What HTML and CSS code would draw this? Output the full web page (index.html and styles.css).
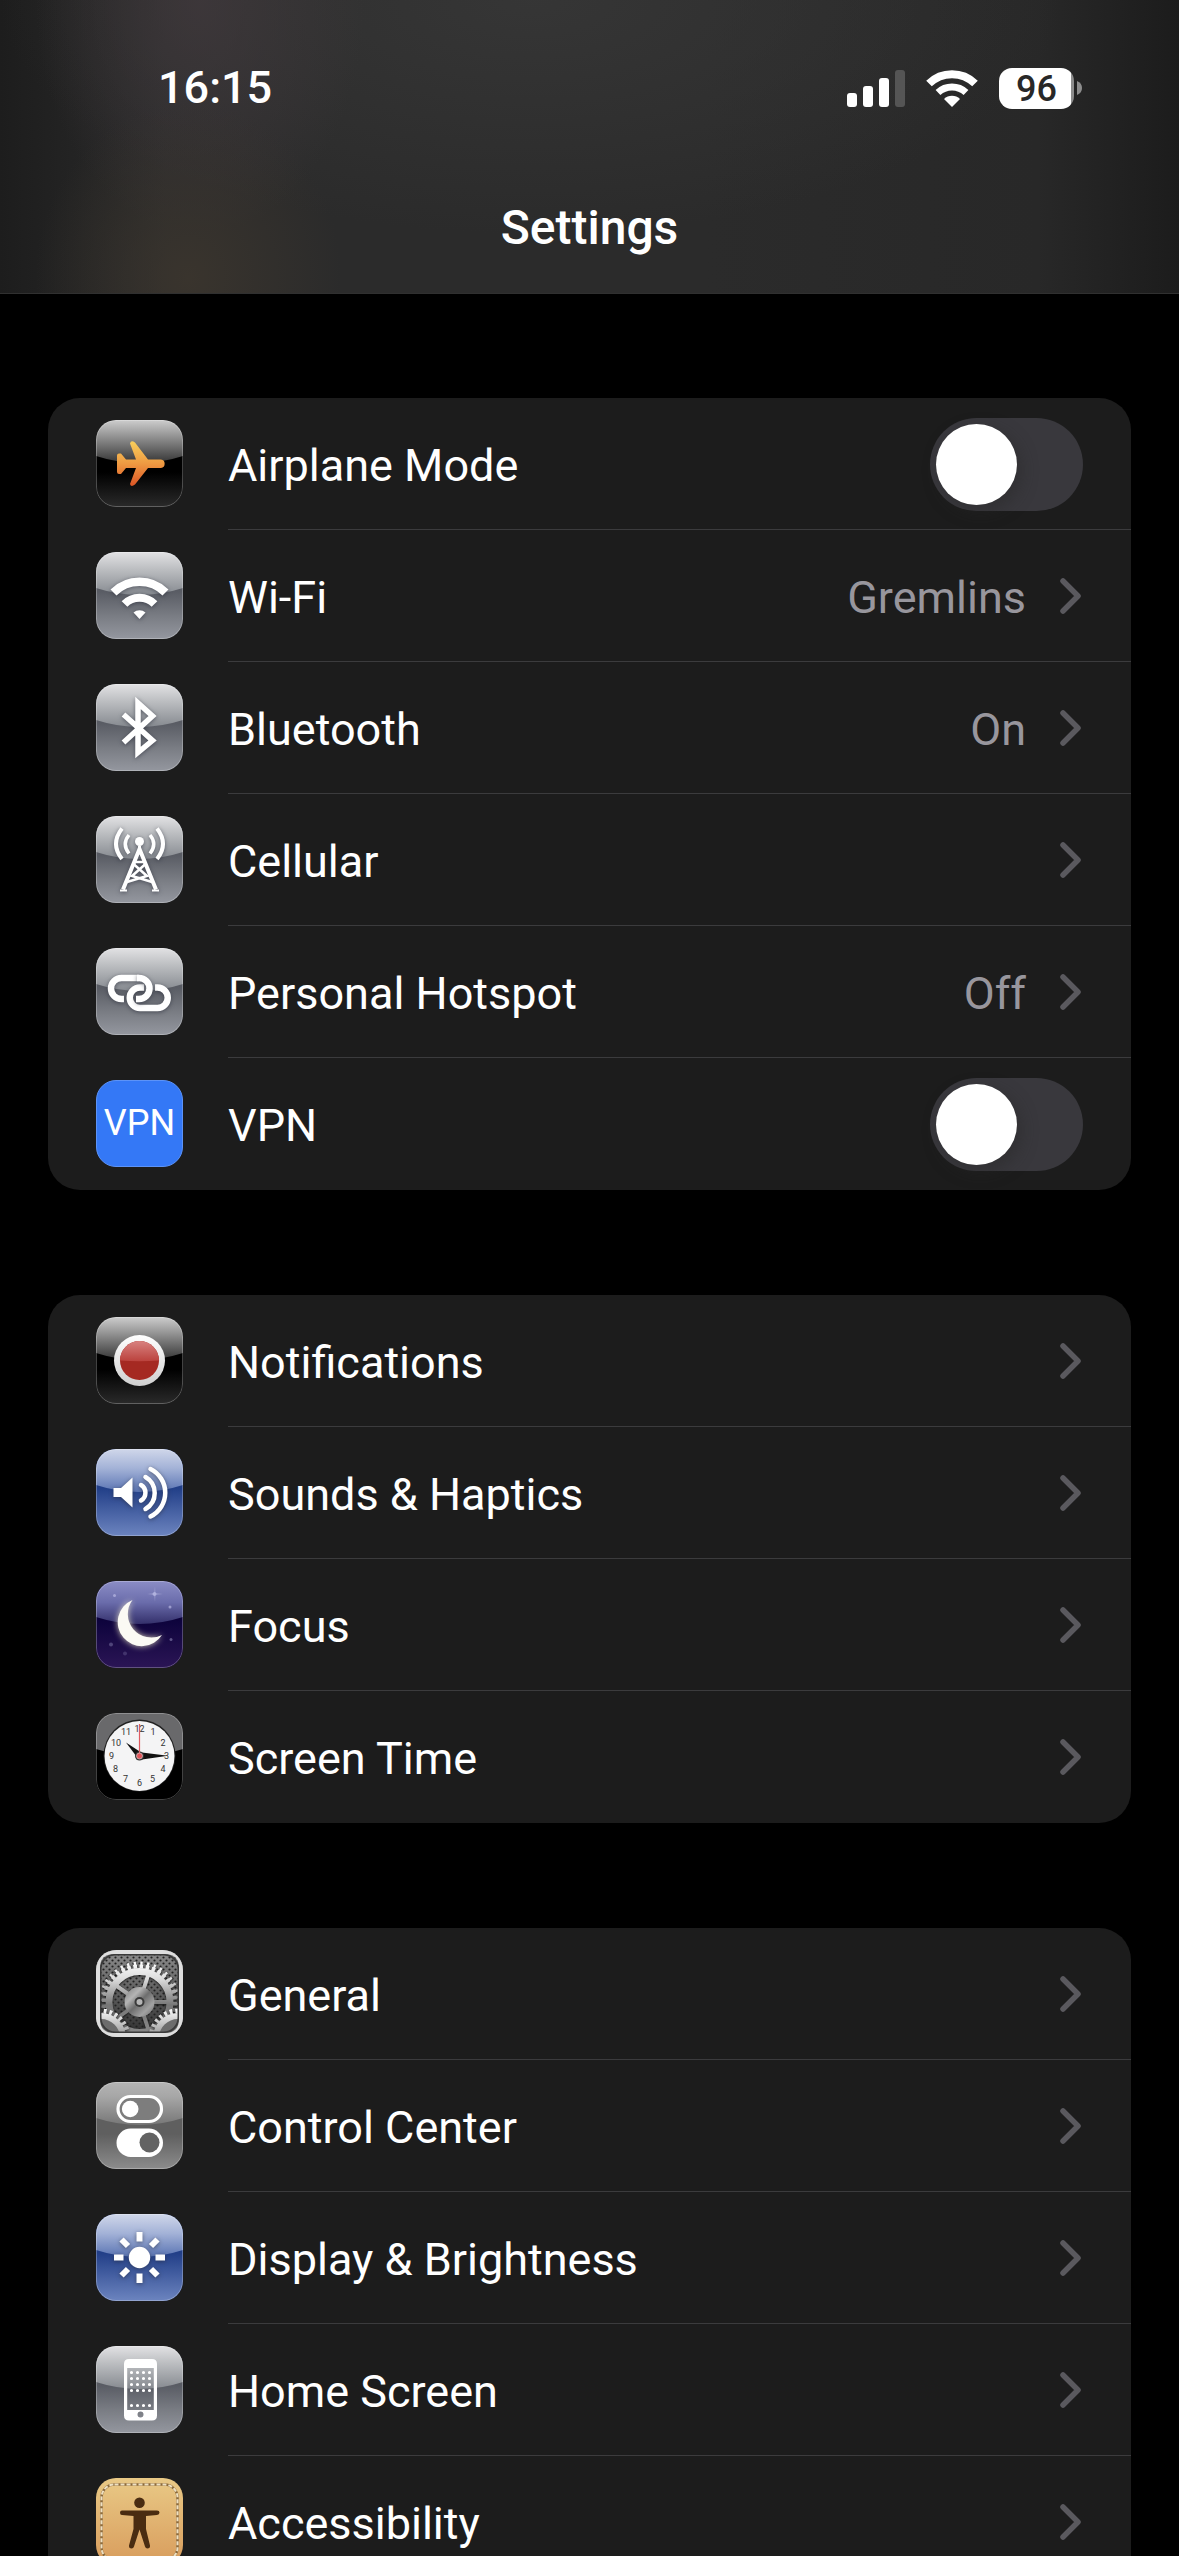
FILE: index.html
```html
<!DOCTYPE html>
<html lang="en">
<head>
<meta charset="utf-8">
<meta name="viewport" content="width=device-width, initial-scale=1">
<title>Settings</title>
<link rel="stylesheet" href="styles.css">
</head>
<body>
<svg class="sprite" width="0" height="0" aria-hidden="true">
  <defs>
    <linearGradient id="silver-base" x1="0" y1="0" x2="0" y2="1"><stop offset=".45" stop-color="#595c64"/><stop offset=".75" stop-color="#7b7e85"/><stop offset="1" stop-color="#94979f"/></linearGradient>
    <linearGradient id="silver-gloss" x1="0" y1="0" x2="0" y2="1"><stop offset="0" stop-color="#e2e2e4"/><stop offset=".4" stop-color="#bcbec1"/><stop offset="1" stop-color="#868a90"/></linearGradient>
    <linearGradient id="black-base" x1="0" y1="0" x2="0" y2="1"><stop offset=".6" stop-color="#000"/><stop offset="1" stop-color="#2a2a2a"/></linearGradient>
    <linearGradient id="black-gloss" x1="0" y1="0" x2="0" y2="1"><stop offset="0" stop-color="#cdcdcd"/><stop offset="1" stop-color="#353535"/></linearGradient>
    <linearGradient id="blue-base" x1="0" y1="0" x2="0" y2="1"><stop offset=".45" stop-color="#223f88"/><stop offset="1" stop-color="#6c84bf"/></linearGradient>
    <linearGradient id="blue-gloss" x1="0" y1="0" x2="0" y2="1"><stop offset="0" stop-color="#d0d7ea"/><stop offset=".45" stop-color="#a3b2d7"/><stop offset="1" stop-color="#5a74b3"/></linearGradient>
    <linearGradient id="night-base" x1="0" y1="0" x2="0" y2="1"><stop offset=".45" stop-color="#0d033c"/><stop offset="1" stop-color="#2b1555"/></linearGradient>
    <linearGradient id="night-gloss" x1="0" y1="0" x2="0" y2="1"><stop offset="0" stop-color="#8b8dc6"/><stop offset=".5" stop-color="#6a6cab"/><stop offset="1" stop-color="#34306b"/></linearGradient>
    <linearGradient id="grey-base" x1="0" y1="0" x2="0" y2="1"><stop offset=".6" stop-color="#5f5f5f"/><stop offset="1" stop-color="#8c8c8c"/></linearGradient>
    <linearGradient id="grey-gloss" x1="0" y1="0" x2="0" y2="1"><stop offset="0" stop-color="#b4b4b4"/><stop offset=".35" stop-color="#a6a6a6"/><stop offset="1" stop-color="#777"/></linearGradient>
    <linearGradient id="plane-fill" x1="0" y1="0" x2="0" y2="1"><stop offset="0" stop-color="#f8cf5c"/><stop offset=".5" stop-color="#ee9a42"/><stop offset="1" stop-color="#dc5525"/></linearGradient>
    <linearGradient id="ring-fill" x1="0" y1="0" x2="0" y2="1"><stop offset="0" stop-color="#fff"/><stop offset="1" stop-color="#cfcfcf"/></linearGradient>
    <linearGradient id="red-gloss" x1="0" y1="0" x2="0" y2="1"><stop offset="0" stop-color="#d88280"/><stop offset="1" stop-color="#bb423d"/></linearGradient>
    <linearGradient id="steel" gradientUnits="userSpaceOnUse" x1="0" y1="10" x2="0" y2="85"><stop offset="0" stop-color="#fff"/><stop offset=".25" stop-color="#ddd"/><stop offset=".6" stop-color="#777"/><stop offset="1" stop-color="#888"/></linearGradient>
    <linearGradient id="steel-small" gradientUnits="userSpaceOnUse" x1="0" y1="58" x2="0" y2="85"><stop offset="0" stop-color="#fff"/><stop offset="1" stop-color="#9a9a9a"/></linearGradient>
    <linearGradient id="hub" x1="0" y1="0" x2="1" y2="1"><stop offset="0" stop-color="#7c7c7c"/><stop offset=".3" stop-color="#b5b5b5"/><stop offset=".5" stop-color="#6d6d6d"/><stop offset=".75" stop-color="#a2a2a2"/><stop offset="1" stop-color="#666"/></linearGradient>
    <linearGradient id="mesh-shade" x1="0" y1="0" x2="0" y2="1"><stop offset="0" stop-color="#8e8e8e"/><stop offset="1" stop-color="#2c2c2c"/></linearGradient>
    <linearGradient id="leather" x1="0" y1="0" x2="0" y2="1"><stop offset="0" stop-color="#e9c986"/><stop offset="1" stop-color="#d89c5c"/></linearGradient>
    <pattern id="mesh" width="6" height="6" patternUnits="userSpaceOnUse"><circle cx="1.5" cy="1.5" r="1.1" fill="#222"/><circle cx="4.5" cy="4.5" r="1.1" fill="#222"/></pattern>
    <path id="gloss" d="M0 0H87V36Q43.500 50 0 36Z"/>
    <rect id="rim" x=".5" y=".5" width="86" height="86" rx="19.500" fill="none" stroke="#fff" stroke-opacity=".26"/>
    <g id="silver"><rect width="87" height="87" fill="url(#silver-base)"/><use href="#gloss" fill="url(#silver-gloss)"/><use href="#rim"/></g>
    <g id="black"><rect width="87" height="87" fill="url(#black-base)"/><use href="#gloss" fill="url(#black-gloss)"/><use href="#rim"/></g>
    <g id="blue"><rect width="87" height="87" fill="url(#blue-base)"/><use href="#gloss" fill="url(#blue-gloss)"/><use href="#rim"/></g>
    <symbol id="chevron" viewBox="0 0 21 36"><path d="M3 3L18 18L3 33" fill="none" stroke="#5a595e" stroke-width="5.500" stroke-linecap="round" stroke-linejoin="round"/></symbol>
  </defs>
</svg>

<div class="screen">
  <header class="top">
    <div class="status">
      <time class="clock">16:15</time>
      <div class="indicators">
        <svg class="signal" viewBox="0 0 58 38" aria-label="Signal strength"><g fill="#fff"><rect y="24" width="10" height="14" rx="3"/><rect x="16" y="17" width="10" height="21" rx="3"/><rect x="32" y="9" width="10" height="29" rx="3"/></g><rect x="48" y="1" width="10" height="37" rx="3" fill="#555"/></svg>
        <svg class="wifi" viewBox="0 0 52 38" aria-label="Wi-Fi signal"><g fill="none" stroke="#fff" stroke-width="8"><path d="M3 14.500A33 33 0 0 1 49 14.500"/><path d="M12 23.500A20.500 20.500 0 0 1 40 23.500" stroke-width="7"/></g><path d="M18 30A11.500 11.500 0 0 1 34 30L26 38Z" fill="#fff"/></svg>
        <div class="battery"><span class="level">96</span><svg class="nub" viewBox="0 0 5 14" aria-hidden="true"><path d="M0 0Q5 2 5 7T0 14Z" fill="#8d8d8d"/></svg></div>
      </div>
    </div>
    <h1 class="title">Settings</h1>
  </header>

  <main class="content">
    <ul class="group">
      <li class="item"><label class="row">
        <svg class="icon" viewBox="0 0 87 87" aria-hidden="true"><use href="#black"/><path d="M21 35.500Q21 33.500 23 33.500H25L30 39.500H40L34 23.500Q35 19.500 39 22.500L52 39.500H65A4.300 4.300 0 0 1 65 48H52L39 64.500Q35 67.500 34 64L40 48H30L25 54H23Q21 54 21 52Z" fill="url(#plane-fill)"/></svg>
        <span class="body"><span class="label">Airplane Mode</span><input class="toggle" type="checkbox" role="switch"></span>
      </label></li>
      <li class="item"><a class="row" href="#wifi">
        <svg class="icon" viewBox="0 0 87 87" aria-hidden="true"><use href="#silver"/><g class="lift"><g fill="none" stroke="#fff" stroke-width="8.500"><path d="M17.500 40.500A37 37 0 0 1 69.500 40.500"/><path d="M28.500 52A21 21 0 0 1 58.500 52" stroke-width="8"/></g><path d="M37.500 60.500A9 9 0 0 1 49.500 60.500L43.500 67Z" fill="#fff"/></g></svg>
        <span class="body"><span class="label">Wi-Fi</span><span class="value">Gremlins</span><svg class="chevron" aria-hidden="true"><use href="#chevron"/></svg></span>
      </a></li>
      <li class="item"><a class="row" href="#bluetooth">
        <svg class="icon" viewBox="0 0 87 87" aria-hidden="true"><use href="#silver"/><path class="lift" d="M27.500 30.500L56.500 56.500L42 68.500V19L56.500 32L27.500 58.500" fill="none" stroke="#fff" stroke-width="5.500"/></svg>
        <span class="body"><span class="label">Bluetooth</span><span class="value">On</span><svg class="chevron" aria-hidden="true"><use href="#chevron"/></svg></span>
      </a></li>
      <li class="item"><a class="row" href="#cellular">
        <svg class="icon" viewBox="0 0 87 87" aria-hidden="true"><use href="#silver"/><g class="lift" fill="none" stroke="#fff"><circle cx="43.500" cy="25.500" r="4.500" fill="#fff" stroke="none"/><path d="M43.500 30V35" stroke-width="3"/><path d="M27 73.500L43.500 33L60 73.500" stroke-width="4"/><path d="M24 74.500H31M56 74.500H63" stroke-width="2"/><path d="M38.500 46H48.500M37.500 48L51 60L31 66M49.500 48L36 60L56 66" stroke-width="2.500"/><path d="M26 12.500Q14 28 26 43M61 12.500Q73 28 61 43" stroke-width="4"/><path d="M33 19Q25.500 28 33 37.500M54 19Q61.500 28 54 37.500" stroke-width="3.500"/></g></svg>
        <span class="body"><span class="label">Cellular</span><svg class="chevron" aria-hidden="true"><use href="#chevron"/></svg></span>
      </a></li>
      <li class="item"><a class="row" href="#hotspot">
        <svg class="icon" viewBox="0 0 87 87" aria-hidden="true"><use href="#silver"/><g fill="none" stroke="#fff" stroke-width="6.500"><path class="lift" d="M28 51H25.500A10.500 10.500 0 0 1 25.500 30H43"/><path class="lift" d="M59 39.500H61.500A10.200 10.200 0 0 1 61.500 60H44A10.200 10.200 0 0 1 44 39.500H48"/><path class="lift" d="M41 30H43A10.500 10.500 0 0 1 43 51H40"/></g></svg>
        <span class="body"><span class="label">Personal Hotspot</span><span class="value">Off</span><svg class="chevron" aria-hidden="true"><use href="#chevron"/></svg></span>
      </a></li>
      <li class="item"><label class="row">
        <span class="icon vpn" aria-hidden="true">VPN</span>
        <span class="body"><span class="label">VPN</span><input class="toggle" type="checkbox" role="switch"></span>
      </label></li>
    </ul>

    <ul class="group">
      <li class="item"><a class="row" href="#notifications">
        <svg class="icon" viewBox="0 0 87 87" aria-hidden="true"><use href="#black"/><circle cx="43.500" cy="43.500" r="25.500" fill="url(#ring-fill)"/><circle cx="43.500" cy="43.500" r="19.500" fill="#a52922"/><path d="M24 43.500A19.500 19.500 0 0 1 63 43.500Q43.500 45 24 43.500Z" fill="url(#red-gloss)"/></svg>
        <span class="body"><span class="label">Notifications</span><svg class="chevron" aria-hidden="true"><use href="#chevron"/></svg></span>
      </a></li>
      <li class="item"><a class="row" href="#sounds">
        <svg class="icon" viewBox="0 0 87 87" aria-hidden="true"><use href="#blue"/><g class="lift"><path d="M17.500 39H25L36.500 28.500V58.500L25 48H17.500Z" fill="#fff"/><path d="M45 36A9 9 0 0 1 45 51.500M49.500 28A18.500 18.500 0 0 1 49.500 60M54.500 20A26.500 26.500 0 0 1 54.500 67.500" fill="none" stroke="#fff" stroke-width="4.500" stroke-linecap="round"/></g></svg>
        <span class="body"><span class="label">Sounds &amp; Haptics</span><svg class="chevron" aria-hidden="true"><use href="#chevron"/></svg></span>
      </a></li>
      <li class="item"><a class="row" href="#focus">
        <svg class="icon" viewBox="0 0 87 87" aria-hidden="true"><rect width="87" height="87" fill="url(#night-base)"/><use href="#gloss" fill="url(#night-gloss)"/><use href="#rim"/><g fill="#c5c5ec"><circle cx="18.500" cy="14.500" r="1.500" opacity=".6"/><circle cx="74" cy="26" r="1.500" opacity=".6"/><circle cx="75" cy="58.500" r="1.500" opacity=".4"/><circle cx="15" cy="63.500" r="2" opacity=".3"/><circle cx="29" cy="72.500" r="2" opacity=".2"/><circle cx="58.500" cy="13" r="2" opacity=".6"/><path d="M59 5L59.500 12L67 13L59.500 14L59 21L58 14L51 13L58 12Z" opacity=".35"/></g><path class="glow" d="M36.500 19A24 24 0 1 0 66 54A23.500 23.500 0 0 1 36.500 19Z" fill="#fbfaf4"/></svg>
        <span class="body"><span class="label">Focus</span><svg class="chevron" aria-hidden="true"><use href="#chevron"/></svg></span>
      </a></li>
      <li class="item"><a class="row" href="#screen-time">
        <svg class="icon" viewBox="0 0 87 87" aria-hidden="true"><rect width="87" height="87" fill="#000"/><use href="#gloss" fill="#69696b"/><use href="#rim"/><circle cx="43.500" cy="42.500" r="36" fill="#222"/><circle cx="43.500" cy="43" r="35" fill="#f4f4f5"/><g class="numerals"><text x="43.500" y="19">12</text><text x="57" y="22">1</text><text x="67" y="33">2</text><text x="70.500" y="46">3</text><text x="67" y="59">4</text><text x="56.500" y="69">5</text><text x="43.500" y="73">6</text><text x="29.500" y="69">7</text><text x="19.500" y="59">8</text><text x="15.500" y="46">9</text><text x="20" y="33">10</text><text x="30" y="22">11</text></g><path d="M30 29.500L46 40L42 45.500Z M46 39.500L72 42.700L46 46.500Z" fill="#111"/><circle cx="43.500" cy="43" r="4.500" fill="#333"/><path d="M43.500 11V43" stroke="#e05a60" stroke-width="1.200"/><circle cx="43.500" cy="43" r="3" fill="#e0555a" stroke="#ddd" stroke-width=".6"/></svg>
        <span class="body"><span class="label">Screen Time</span><svg class="chevron" aria-hidden="true"><use href="#chevron"/></svg></span>
      </a></li>
    </ul>

    <ul class="group">
      <li class="item"><a class="row" href="#general">
        <svg class="icon" viewBox="0 0 87 87" aria-hidden="true"><rect width="87" height="87" fill="url(#mesh-shade)"/><rect width="87" height="87" fill="url(#mesh)"/>
          <g class="gear"><circle cx="43.500" cy="52" r="30.500" fill="none" stroke="url(#steel)" stroke-width="7"/><circle cx="43.500" cy="52" r="35.500" fill="none" stroke="url(#steel)" stroke-width="4" pathLength="360" stroke-dasharray="6 4"/><circle cx="43.500" cy="52" r="38" fill="none" stroke="url(#steel)" stroke-width="5" pathLength="360" stroke-dasharray="3.500 6.500" stroke-dashoffset="-1.250"/>
          <path d="M43.500 52H72M43.500 52L52.500 24M43.500 52L20 35.500M43.500 52L20 69M43.500 52L52.500 80" stroke="url(#steel)" stroke-width="4"/></g>
          <circle cx="43.500" cy="52" r="15" fill="url(#hub)"/><circle cx="43.500" cy="52" r="5" fill="#3a3a3a"/><circle cx="43.500" cy="52" r="3" fill="#b5b5b5"/>
          <g class="gear"><circle cx="5" cy="88" r="20" fill="#6c6c6c"/><circle cx="5" cy="88" r="22" fill="none" stroke="url(#steel-small)" stroke-width="6"/><circle cx="5" cy="88" r="27" fill="none" stroke="url(#steel-small)" stroke-width="5" pathLength="360" stroke-dasharray="6 6"/></g>
          <g class="gear"><circle cx="82" cy="88" r="20" fill="#6c6c6c"/><circle cx="82" cy="88" r="22" fill="none" stroke="url(#steel-small)" stroke-width="6"/><circle cx="82" cy="88" r="27" fill="none" stroke="url(#steel-small)" stroke-width="5" pathLength="360" stroke-dasharray="6 6"/></g>
          <rect x="4.500" y="4.500" width="78" height="78" rx="15" fill="none" stroke="#3a3a3a" stroke-width="2"/><path d="M0 0H87V87H0ZM18 4Q4 4 4 18V69Q4 83 18 83H69Q83 83 83 69V18Q83 4 69 4Z" fill="#dedede" fill-rule="evenodd"/></svg>
        <span class="body"><span class="label">General</span><svg class="chevron" aria-hidden="true"><use href="#chevron"/></svg></span>
      </a></li>
      <li class="item"><a class="row" href="#control-center">
        <svg class="icon" viewBox="0 0 87 87" aria-hidden="true"><rect width="87" height="87" fill="url(#grey-base)"/><use href="#gloss" fill="url(#grey-gloss)"/><use href="#rim"/><rect x="22" y="14.500" width="43.500" height="25" rx="12.500" fill="#7d7d7d" stroke="#fff" stroke-width="3.200"/><circle cx="34.200" cy="27" r="8.300" fill="#fff"/><rect x="20.500" y="46.500" width="46.500" height="28.500" rx="14.200" fill="#fff"/><circle cx="53.500" cy="60.500" r="10" fill="#636363"/></svg>
        <span class="body"><span class="label">Control Center</span><svg class="chevron" aria-hidden="true"><use href="#chevron"/></svg></span>
      </a></li>
      <li class="item"><a class="row" href="#display">
        <svg class="icon" viewBox="0 0 87 87" aria-hidden="true"><use href="#blue"/><g class="lift"><circle cx="43.500" cy="43.500" r="10.700" fill="#fff"/><path d="M43.500 18V27.500M43.500 59.500V69M18 43.500H27.500M59.500 43.500H69M25.500 25.500L32 32M55 55L61.500 61.500M25.500 61.500L32 55M55 32L61.500 25.500" stroke="#fff" stroke-width="6"/></g></svg>
        <span class="body"><span class="label">Display &amp; Brightness</span><svg class="chevron" aria-hidden="true"><use href="#chevron"/></svg></span>
      </a></li>
      <li class="item"><a class="row" href="#home-screen">
        <svg class="icon" viewBox="0 0 87 87" aria-hidden="true"><use href="#silver"/><path d="M33 13H56Q61 13 61 18V69.500Q61 74.500 56 74.500H33Q28 74.500 28 69.500V18Q28 13 33 13ZM31.200 22V64H57.800V22ZM44.500 65.400A3 3 0 1 0 44.500 71.400A3 3 0 1 0 44.500 65.400Z" fill="#fff" fill-rule="evenodd"/><path d="M35.500 26.500H55M35.500 32.500H55M35.500 38.500H55M35.500 44.500H55M35.500 59.500H55" stroke="#fff" stroke-width="3.200" stroke-linecap="round" stroke-dasharray="0 6"/></svg>
        <span class="body"><span class="label">Home Screen</span><svg class="chevron" aria-hidden="true"><use href="#chevron"/></svg></span>
      </a></li>
      <li class="item"><a class="row" href="#accessibility">
        <svg class="icon" viewBox="0 0 87 87" aria-hidden="true"><rect width="87" height="87" fill="url(#leather)"/><rect x="5.500" y="6.500" width="76" height="76" rx="13" fill="none" stroke="#8b6a3c" stroke-width="2.500"/><rect x="5.500" y="6.500" width="76" height="76" rx="13" fill="none" stroke="#eee0c2" stroke-width="2" stroke-dasharray="4 2"/><g fill="#4a2c11"><circle cx="43.500" cy="24.800" r="5.300"/><path d="M26 32.500H61Q63.500 32.500 63.500 34.500T61 37L50 38V51L54 67.500Q54.500 70.500 51.500 70.500Q49.500 70.500 49 68.500L43.500 51.500L38 68.500Q37.500 70.500 35.500 70.500Q32.500 70.500 33 67.500L37.500 51V38L26 37Q24 37 24 34.800T26 32.500Z"/></g></svg>
        <span class="body"><span class="label">Accessibility</span><svg class="chevron" aria-hidden="true"><use href="#chevron"/></svg></span>
      </a></li>
    </ul>
  </main>
</div>
</body>
</html>
```
FILE: styles.css
```css
* {
  box-sizing: border-box;
}

body {
  margin: 0;
  background: #000;
  color: #fff;
  font-family: Roboto, "Noto Sans", sans-serif;
  font-size: 45px;
  line-height: 56px;
}

.sprite {
  position: absolute;
}

.screen {
  display: flex;
  flex-direction: column;
  height: 100vh;
  overflow: hidden;
}

/* Status bar and title */

.top {
  flex: none;
  padding-top: 60px;
  border-bottom: 1px solid #303030;
  background:
    radial-gradient(ellipse 13% 60% at 16% 95%, rgba(62, 55, 46, 0.75), transparent),
    radial-gradient(ellipse 14% 80% at 17% 0, rgba(66, 58, 62, 0.7), transparent),
    radial-gradient(ellipse 45% 80% at 45% 0, rgba(58, 58, 58, 0.7), transparent),
    linear-gradient(90deg, #1d1d1d, #2b2b2b 14%, #2b2b2b 60%, #282828 88%, #1c1c1c);
}

.status {
  display: flex;
  align-items: center;
  justify-content: space-between;
  height: 56px;
  padding: 0 97px 0 158px;
}

.clock {
  font-size: 45px;
  font-weight: 500;
}

.indicators {
  display: flex;
  align-items: center;
  gap: 21px;
}

.signal {
  width: 58px;
  height: 38px;
}

.wifi {
  width: 52px;
  height: 38px;
}

.battery {
  display: flex;
  align-items: center;
  gap: 3px;
}

.level {
  width: 75px;
  height: 41px;
  border-radius: 13px;
  background: linear-gradient(90deg, #fff 72px, #8d8d8d 72px);
  color: #282828;
  font-size: 36px;
  font-weight: 500;
  line-height: 42px;
  text-align: center;
}

.nub {
  width: 5px;
  height: 14px;
}

.title {
  margin: 0;
  padding: 84px 0 37px;
  font-size: 48px;
  font-weight: 500;
  text-align: center;
}

/* Grouped lists */

.content {
  display: flex;
  flex: 1;
  flex-direction: column;
  gap: 105px;
  min-height: 0;
  padding: 104px 48px;
  overflow-y: auto;
  scrollbar-width: none;
}

.group {
  flex: none;
  margin: 0;
  padding: 0;
  border-radius: 32px;
  background: #1c1c1c;
  list-style: none;
  overflow: hidden;
}

.row {
  display: flex;
  align-items: flex-start;
  gap: 45px;
  padding-left: 48px;
  color: inherit;
  text-decoration: none;
}

.icon {
  flex: none;
  width: 87px;
  height: 87px;
  margin-top: 22px;
  border-radius: 20px;
  overflow: hidden;
}

.vpn {
  border: 1px solid #5c93f8;
  background: #3478f6;
  font-size: 36px;
  line-height: 85px;
  text-align: center;
}

.body {
  display: flex;
  flex: 1;
  align-items: center;
  height: 132px;
  padding-right: 48px;
  border-bottom: 1px solid #3b3b3d;
}

.item:last-child .body {
  border-bottom-color: transparent;
}

.label {
  flex: 1;
  padding-top: 5px;
}

.value {
  padding-top: 5px;
  color: #98969d;
}

.chevron {
  width: 21px;
  height: 36px;
  margin: 0 2px 0 34px;
}

.toggle {
  display: flex;
  width: 153px;
  height: 93px;
  margin: 2px 0 0;
  padding: 6px;
  border-radius: 47px;
  background: #39383d;
  appearance: none;
}

.toggle::before {
  width: 81px;
  height: 81px;
  border-radius: 50%;
  background: #fff;
  box-shadow: 4px 6px 16px rgba(40, 40, 40, 0.5);
  content: "";
}

.toggle:checked {
  justify-content: flex-end;
  background: #30d158;
}

/* Icon artwork */

.lift {
  filter: drop-shadow(0 1px 2px rgba(40, 44, 56, 0.6));
}

.glow {
  filter: drop-shadow(0 0 3px rgba(255, 250, 210, 0.8));
}

.gear {
  filter: drop-shadow(0 1px 1px rgba(0, 0, 0, 0.7));
}

.numerals {
  fill: #333;
  font-size: 9px;
  text-anchor: middle;
}
```
